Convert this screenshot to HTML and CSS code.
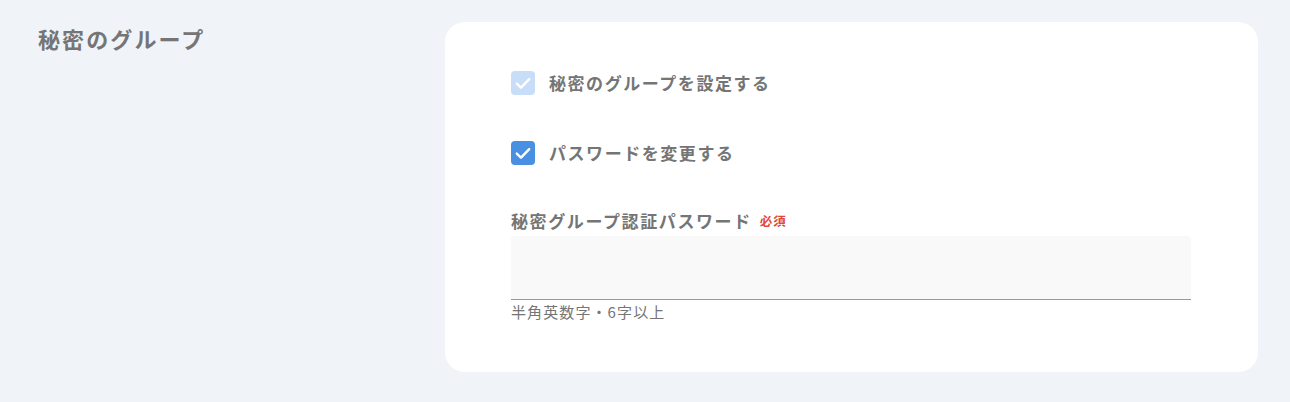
FILE: index.html
```html
<!DOCTYPE html>
<html lang="ja">
<head>
<meta charset="utf-8">
<link rel="stylesheet" href="styles.css">
</head>
<body>
<div class="page">
  <h2 class="section-title">秘密のグループ</h2>
  <div class="card">
    <label class="check-row">
      <span class="checkbox disabled">
        <svg viewBox="0 0 24 24" width="24" height="24"><path d="M5.8 12.6l4.2 4 8.2-8.4" fill="none" stroke="#fff" stroke-width="2.4" stroke-linecap="round" stroke-linejoin="round"/></svg>
      </span>
      <span class="check-label">秘密のグループを設定する</span>
    </label>
    <label class="check-row second">
      <span class="checkbox">
        <svg viewBox="0 0 24 24" width="24" height="24"><path d="M5.8 12.6l4.2 4 8.2-8.4" fill="none" stroke="#fff" stroke-width="2.4" stroke-linecap="round" stroke-linejoin="round"/></svg>
      </span>
      <span class="check-label">パスワードを変更する</span>
    </label>
    <div class="field">
      <div class="field-label">秘密グループ認証パスワード<span class="required">必須</span></div>
      <div class="input"></div>
      <div class="hint">半角英数字・6字以上</div>
    </div>
  </div>
</div>
</body>
</html>
```
FILE: styles.css
```css
* { box-sizing: border-box; }
html, body { margin: 0; padding: 0; }
body {
  background: #f0f3f7;
  font-family: "Noto Sans CJK JP", "Noto Sans", sans-serif;
  color: #757575;
  width: 1290px;
  height: 402px;
  overflow: hidden;
}
.page {
  display: flex;
  padding: 22px 32px 0 38px;
}
.section-title {
  margin: 0;
  width: 407px;
  font-size: 22px;
  font-weight: 700;
  letter-spacing: 2.1px;
  line-height: 30px;
  padding-top: 1px;
  color: #757575;
  flex-shrink: 0;
}
.card {
  width: 813px;
  height: 350px;
  background: #fff;
  border-radius: 20px;
  padding: 49px 67px 0 66px;
}
.check-row {
  display: flex;
  align-items: center;
  height: 24px;
}
.check-row.second { margin-top: 46px; }
.checkbox {
  width: 24px;
  height: 24px;
  border-radius: 4px;
  background: #4a90e2;
  display: flex;
  flex-shrink: 0;
}
.checkbox.disabled { background: #c8ddf7; }
.check-label {
  margin-left: 14px;
  font-size: 17px;
  font-weight: 700;
  letter-spacing: 1.55px;
  line-height: 24px;
  color: #757575;
}
.field { margin-top: 44px; }
.field-label {
  font-size: 17px;
  font-weight: 700;
  letter-spacing: 1.6px;
  line-height: 24px;
  color: #757575;
  display: flex;
  align-items: center;
}
.required {
  color: #e0473a;
  font-size: 12.5px;
  font-weight: 700;
  letter-spacing: 1px;
  margin-left: 8px;
  line-height: 16px;
}
.input {
  margin-top: 3px;
  height: 64px;
  background: #f9f9f9;
  border-radius: 4px 4px 0 0;
  border-bottom: 1px solid #9a9a9a;
}
.hint {
  margin-top: 2px;
  font-size: 15px;
  letter-spacing: 1.1px;
  line-height: 20px;
  color: #757575;
}
```
